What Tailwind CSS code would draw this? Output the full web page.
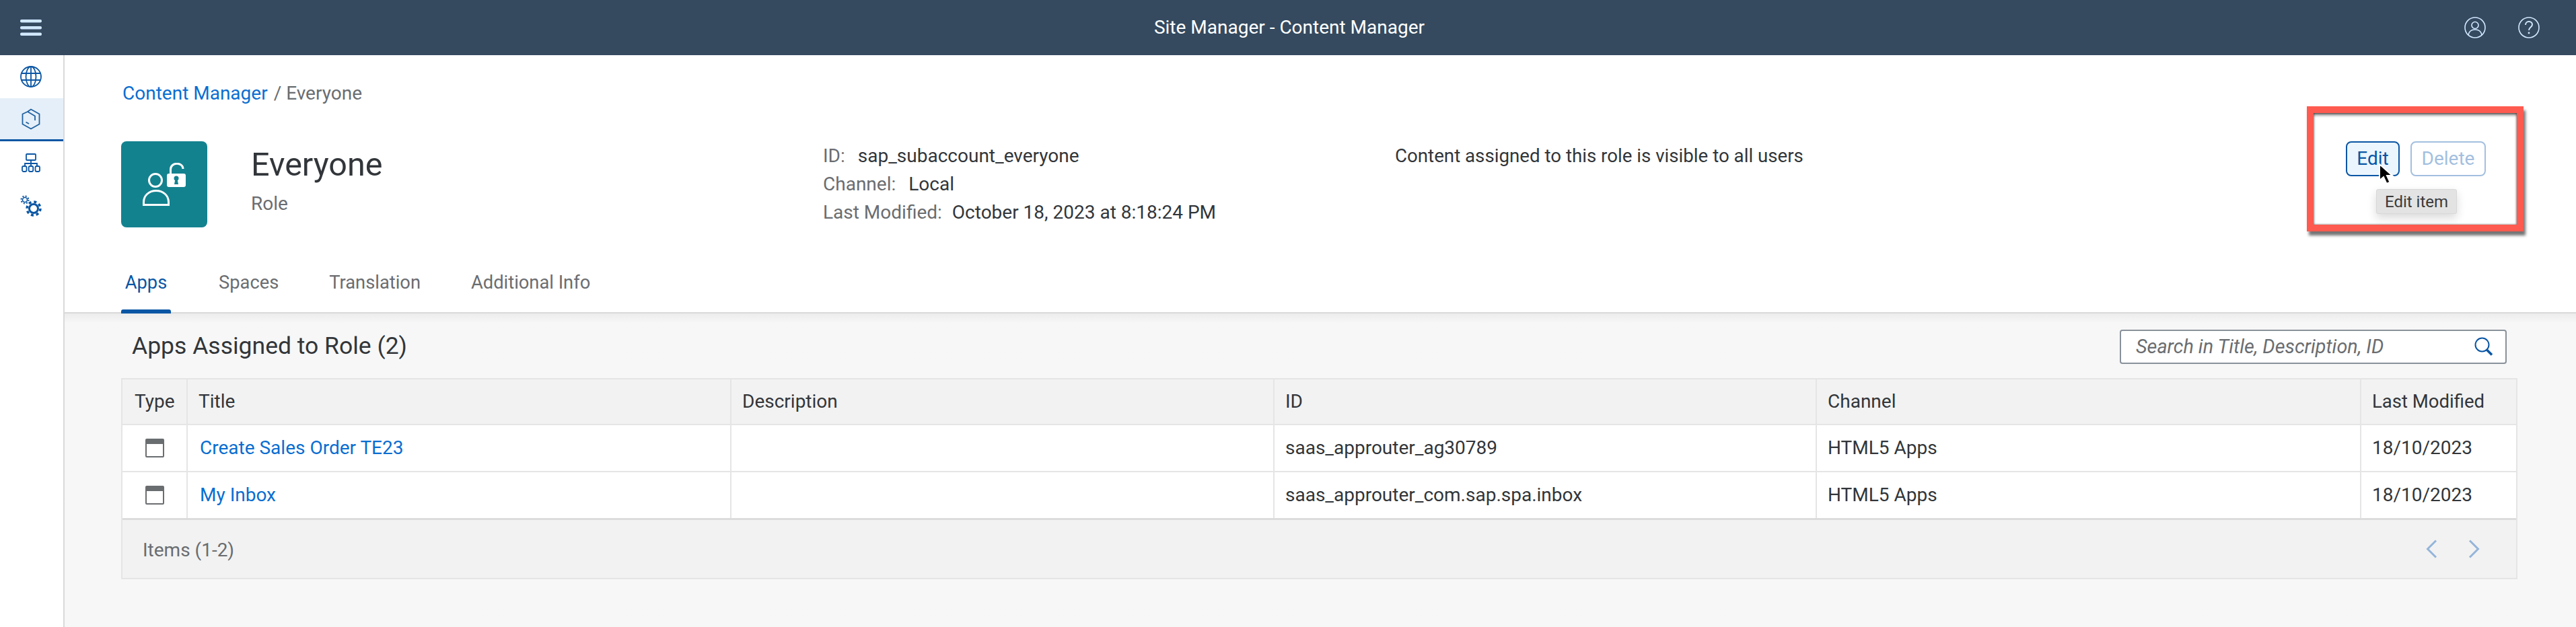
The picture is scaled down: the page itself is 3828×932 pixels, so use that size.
<!DOCTYPE html>
<html lang="en">
<head>
    <meta charset="UTF-8">
    <title>Site Manager - Content Manager</title>
    <script src="https://cdn.jsdelivr.net/npm/@tailwindcss/browser@4"></script>
</head>
<body class="font-['Roboto',sans-serif] text-[#32363a] bg-white overflow-hidden">
<div class="relative w-[3828px] h-[932px] flex flex-col overflow-hidden">

    <!-- Shell bar -->
    <header class="h-[82px] shrink-0 bg-[#354a5f] grid grid-cols-[1fr_auto_1fr] items-center pl-[30px] pr-[54px]">
        <svg class="w-[32px] h-[24px]" viewBox="0 0 32 24" fill="#d1e8ff">
            <rect y="0" width="32" height="4.5" rx="2"/>
            <rect y="10" width="32" height="4.5" rx="2"/>
            <rect y="19.5" width="32" height="4.5" rx="2"/>
        </svg>
        <div class="ml-[28px] text-white text-[28px] leading-none">Site Manager - Content Manager</div>
        <div class="flex items-center justify-end gap-[48px]">
            <svg class="w-[32px] h-[32px]" viewBox="0 0 32 32" fill="none" stroke="#d1e8ff" stroke-width="1.6">
                <circle cx="16" cy="16" r="15"/>
                <circle cx="16" cy="12.5" r="5"/>
                <path d="M6 27c1-6 5-8 10-8s9 2 10 8"/>
            </svg>
            <svg class="w-[32px] h-[32px]" viewBox="0 0 32 32" fill="none" stroke="#d1e8ff" stroke-width="1.6">
                <circle cx="16" cy="16" r="15"/>
                <path d="M11 12c0-3 2.200-5 5-5s5 2 5 4.600c0 4-5 4-5 8.400" stroke-width="2"/>
                <circle cx="16" cy="24" r="1.400" fill="#d1e8ff" stroke="none"/>
            </svg>
        </div>
    </header>

    <div class="flex flex-1 min-h-0">
        <!-- Side navigation -->
        <nav class="w-[96px] shrink-0 border-r-2 border-[#d9d9d9] bg-white">
            <div class="h-[64px] flex items-center pl-[30px]">
                <svg class="w-[32px] h-[32px]" viewBox="0 0 32 32" fill="none" stroke="#0a56a4" stroke-width="1.800">
                    <circle cx="16" cy="16" r="15"/>
                    <ellipse cx="16" cy="16" rx="7.500" ry="15"/>
                    <path d="M2 11h28M2 21h28M16 1v30"/>
                </svg>
            </div>
            <div class="h-[64px] flex items-center pl-[32px] bg-[#e5eff9] border-b-[3px] border-[#0a56a4]">
                <svg class="w-[28px] h-[32px]" viewBox="0 0 28 32" fill="none" stroke="#21619f" stroke-width="1.800">
                    <path d="M9 5 14 1.500 26.500 8.500V23.500L14 30.500 1.500 23.500V8.500L9 5"/>
                    <path d="M9 5 20 11.500V18"/>
                    <path d="M6.500 20.500 11 23"/>
                </svg>
            </div>
            <div class="h-[64px] flex items-center pl-[32px]">
                <svg class="w-[28px] h-[28px]" viewBox="0 0 28 28" fill="none" stroke="#0a56a4" stroke-width="1.800">
                    <rect x="7" y="1" width="14" height="9" rx="1"/>
                    <path d="M14 10v8M5 19v-4h18v4"/>
                    <rect x="1" y="19" width="6.500" height="8" rx="2"/>
                    <rect x="10.700" y="19" width="6.500" height="8" rx="2"/>
                    <rect x="20.500" y="19" width="6.500" height="8" rx="2"/>
                </svg>
            </div>
            <div class="h-[64px] flex items-center pl-[30px]">
                <svg class="w-[32px] h-[32px]" viewBox="0 0 32 32" fill="none" stroke="#0a56a4">
                    <circle cx="7" cy="7" r="3.500" stroke-width="1.600"/>
                    <circle cx="7" cy="7" r="5.500" stroke-width="2" stroke-dasharray="2 2.320"/>
                    <circle cx="20" cy="20" r="6.500" stroke-width="3"/>
                    <circle cx="20" cy="20" r="10" stroke-width="3.500" stroke-dasharray="4 3.850"/>
                </svg>
            </div>
        </nav>

        <main class="flex-1 min-w-0 flex flex-col">
            <!-- Object page header -->
            <section class="h-[384px] shrink-0 flex flex-col bg-white border-b-2 border-[#d9d9d9] pl-[84px]">
                <div class="h-[48px] mt-[33px] pl-[2px] flex items-center text-[28px] leading-none text-[#6a6d70]">
                    <a class="text-[#0a6ed1]">Content Manager</a>
                    <span class="ml-[9px]">/ Everyone</span>
                </div>
                <div class="flex items-start mt-[47px] h-[128px]">
                    <div class="w-[128px] h-[128px] rounded-[8px] bg-[#13828f] flex items-center justify-center shrink-0">
                        <svg class="w-[64px] h-[64px]" viewBox="0 0 64 64" fill="none" stroke="#fff" stroke-width="3">
                            <circle cx="19" cy="26" r="9.500"/>
                            <path d="M1.500 62.500v-4c0-10 8-17 18.500-17s18.500 7 18.500 17v4z"/>
                            <path d="M41.500 18V10C41.500-1.500 60-1.500 60 9"/>
                            <rect x="36" y="16" width="28" height="20" rx="3" fill="#fff" stroke="none"/>
                            <circle cx="50" cy="23" r="3.500" fill="#13828f" stroke="none"/>
                            <path d="M48.500 24h3l1.500 8h-6z" fill="#13828f" stroke="none"/>
                        </svg>
                    </div>
                    <div class="w-[915px] pl-[65px] shrink-0">
                        <div class="text-[48.5px] leading-none mt-[11px] text-[#32363a]">Everyone</div>
                        <div class="text-[28px] leading-none mt-[19px] text-[#6a6d70]">Role</div>
                    </div>
                    <div class="w-[850px] shrink-0 flex flex-col gap-[14px] text-[28px] leading-[28px] mt-[8px]">
                        <div><span class="text-[#6a6d70] mr-[19px]">ID:</span>sap_subaccount_everyone</div>
                        <div><span class="text-[#6a6d70] mr-[19px]">Channel:</span>Local</div>
                        <div><span class="text-[#6a6d70] mr-[15px]">Last Modified:</span>October 18, 2023 at 8:18:24 PM</div>
                    </div>
                    <div class="text-[27.7px] leading-[28px] mt-[8px]">Content assigned to this role is visible to all users</div>
                </div>
                <div class="flex mt-auto h-[74px] text-[27.3px] text-[#6a6d70]">
                    <div class="w-[74px] flex justify-center pt-[10px] text-[#0a56a4] relative">Apps
                        <div class="absolute left-0 right-0 -bottom-[2px] h-[6px] rounded-t-[3px] bg-[#0a56a4]"></div>
                    </div>
                    <div class="ml-[71px] pt-[10px]">Spaces</div>
                    <div class="ml-[75px] pt-[10px]">Translation</div>
                    <div class="ml-[75px] pt-[10px]">Additional Info</div>
                </div>
            </section>

            <!-- Assigned apps -->
            <section class="flex-1 bg-[#f7f7f7] pl-[84px] pr-[87px] bg-linear-to-b from-[#ececec] to-[#f7f7f7] to-[14px]">
                <div class="h-[96px] flex items-center justify-between pl-[16px] pr-[16px] pt-[2px]">
                    <h2 class="text-[35.5px] leading-none">Apps Assigned to Role (2)</h2>
                    <div class="w-[575px] h-[51px] bg-white border-2 border-[#89919a] rounded-[4px] flex items-center justify-between pl-[22px] pr-[18px]">
                        <span class="italic text-[28.8px] leading-none text-[#6a6d70]">Search in Title, Description, ID</span>
                        <svg class="w-[28px] h-[28px]" viewBox="0 0 28 28" fill="none" stroke="#0a56a4" stroke-width="2">
                            <circle cx="11.500" cy="11.500" r="10"/>
                            <path d="M18.500 19 26 26.500" stroke-width="3.500"/>
                        </svg>
                    </div>
                </div>

                <div class="border-2 border-[#e5e5e5] text-[28px]">
                    <div class="grid grid-cols-[97px_808px_807px_806px_809px_1fr] h-[68px] bg-[#f2f2f2] border-b-2 border-[#e5e5e5]">
                        <div class="flex items-center pl-[18px] border-r-2 border-[#e5e5e5]">Type</div>
                        <div class="flex items-center pl-[16px] border-r-2 border-[#e5e5e5]">Title</div>
                        <div class="flex items-center pl-[16px] border-r-2 border-[#e5e5e5]">Description</div>
                        <div class="flex items-center pl-[16px] border-r-2 border-[#e5e5e5]">ID</div>
                        <div class="flex items-center pl-[16px] border-r-2 border-[#e5e5e5]">Channel</div>
                        <div class="flex items-center pl-[16px] text-[27.5px]">Last Modified</div>
                    </div>
                    <div class="grid grid-cols-[97px_808px_807px_806px_809px_1fr] h-[70px] bg-white border-b-2 border-[#e5e5e5]">
                        <div class="flex items-center justify-center border-r-2 border-[#e5e5e5]">
                            <div class="w-[28px] h-[28px] rounded-[2px] border-2 border-[#6a6d70] border-t-[8px]"></div>
                        </div>
                        <div class="flex items-center pl-[18px] border-r-2 border-[#e5e5e5] text-[#0a6ed1]">Create Sales Order TE23</div>
                        <div class="border-r-2 border-[#e5e5e5]"></div>
                        <div class="flex items-center pl-[16px] border-r-2 border-[#e5e5e5]">saas_approuter_ag30789</div>
                        <div class="flex items-center pl-[16px] border-r-2 border-[#e5e5e5]">HTML5 Apps</div>
                        <div class="flex items-center pl-[16px]">18/10/2023</div>
                    </div>
                    <div class="grid grid-cols-[97px_808px_807px_806px_809px_1fr] h-[68px] bg-white">
                        <div class="flex items-center justify-center border-r-2 border-[#e5e5e5]">
                            <div class="w-[28px] h-[28px] rounded-[2px] border-2 border-[#6a6d70] border-t-[8px]"></div>
                        </div>
                        <div class="flex items-center pl-[18px] border-r-2 border-[#e5e5e5] text-[#0a6ed1]">My Inbox</div>
                        <div class="border-r-2 border-[#e5e5e5]"></div>
                        <div class="flex items-center pl-[16px] border-r-2 border-[#e5e5e5]">saas_approuter_com.sap.spa.inbox</div>
                        <div class="flex items-center pl-[16px] border-r-2 border-[#e5e5e5]">HTML5 Apps</div>
                        <div class="flex items-center pl-[16px]">18/10/2023</div>
                    </div>
                    <div class="h-[89px] bg-[#f2f2f2] border-t-[3px] border-[#dcdcdc] flex items-center justify-between pl-[30px] pr-[54px] text-[#6a6d70]">
                        <span class="pt-[3px]">Items (1-2)</span>
                        <div class="flex items-center gap-[46px]">
                            <svg class="w-[17px] h-[28px]" viewBox="0 0 17 28" fill="none" stroke="#94b5da" stroke-width="3"><path d="M15 1.500 2.500 14 15 26.500"/></svg>
                            <svg class="w-[17px] h-[28px]" viewBox="0 0 17 28" fill="none" stroke="#94b5da" stroke-width="3"><path d="M2 1.500 14.500 14 2 26.500"/></svg>
                        </div>
                    </div>
                </div>
            </section>
        </main>
    </div>

    <!-- Annotation: red frame around the action buttons -->
    <div class="absolute left-[3428px] top-[158px] w-[322px] h-[186px] border-[10px] border-[#ff5a4f] shadow-[3px_6px_4px_rgba(0,0,0,0.55),inset_0_5px_4px_-2px_rgba(0,0,0,0.55),inset_-1px_0_3px_rgba(0,0,0,0.35),inset_1px_0_3px_rgba(0,0,0,0.35)] bg-white">
        <div class="flex gap-[16px] pl-[48px] pt-[42px]">
            <div class="w-[80px] h-[52px] rounded-[8px] border-2 border-[#0a56a4] bg-[#ebf5fe] text-[#0a56a4] text-[28px] flex items-center justify-center">Edit</div>
            <div class="w-[112px] h-[52px] rounded-[8px] border-2 border-[#a3bfdf] bg-white text-[#a3bfdf] text-[28px] flex items-center justify-center">Delete</div>
        </div>
        <div class="absolute left-[93px] top-[113px] w-[120px] h-[37px] rounded-[3px] bg-[#e3e3e3] border border-[#d8d8d8] shadow-[0_6px_14px_rgba(0,0,0,0.15)] text-[#3a3a3a] text-[24px] leading-none flex items-center justify-center">Edit item</div>
        <!-- mouse pointer -->
        <svg class="absolute left-[96px] top-[75px] w-[24px] h-[34px]" viewBox="0 0 24 34">
            <path d="M2 1v24l6-5 4.500 10 5-2.200-4.500-9.800h8z" fill="#000" stroke="#fff" stroke-width="2"/>
        </svg>
    </div>
</div>
</body>
</html>
